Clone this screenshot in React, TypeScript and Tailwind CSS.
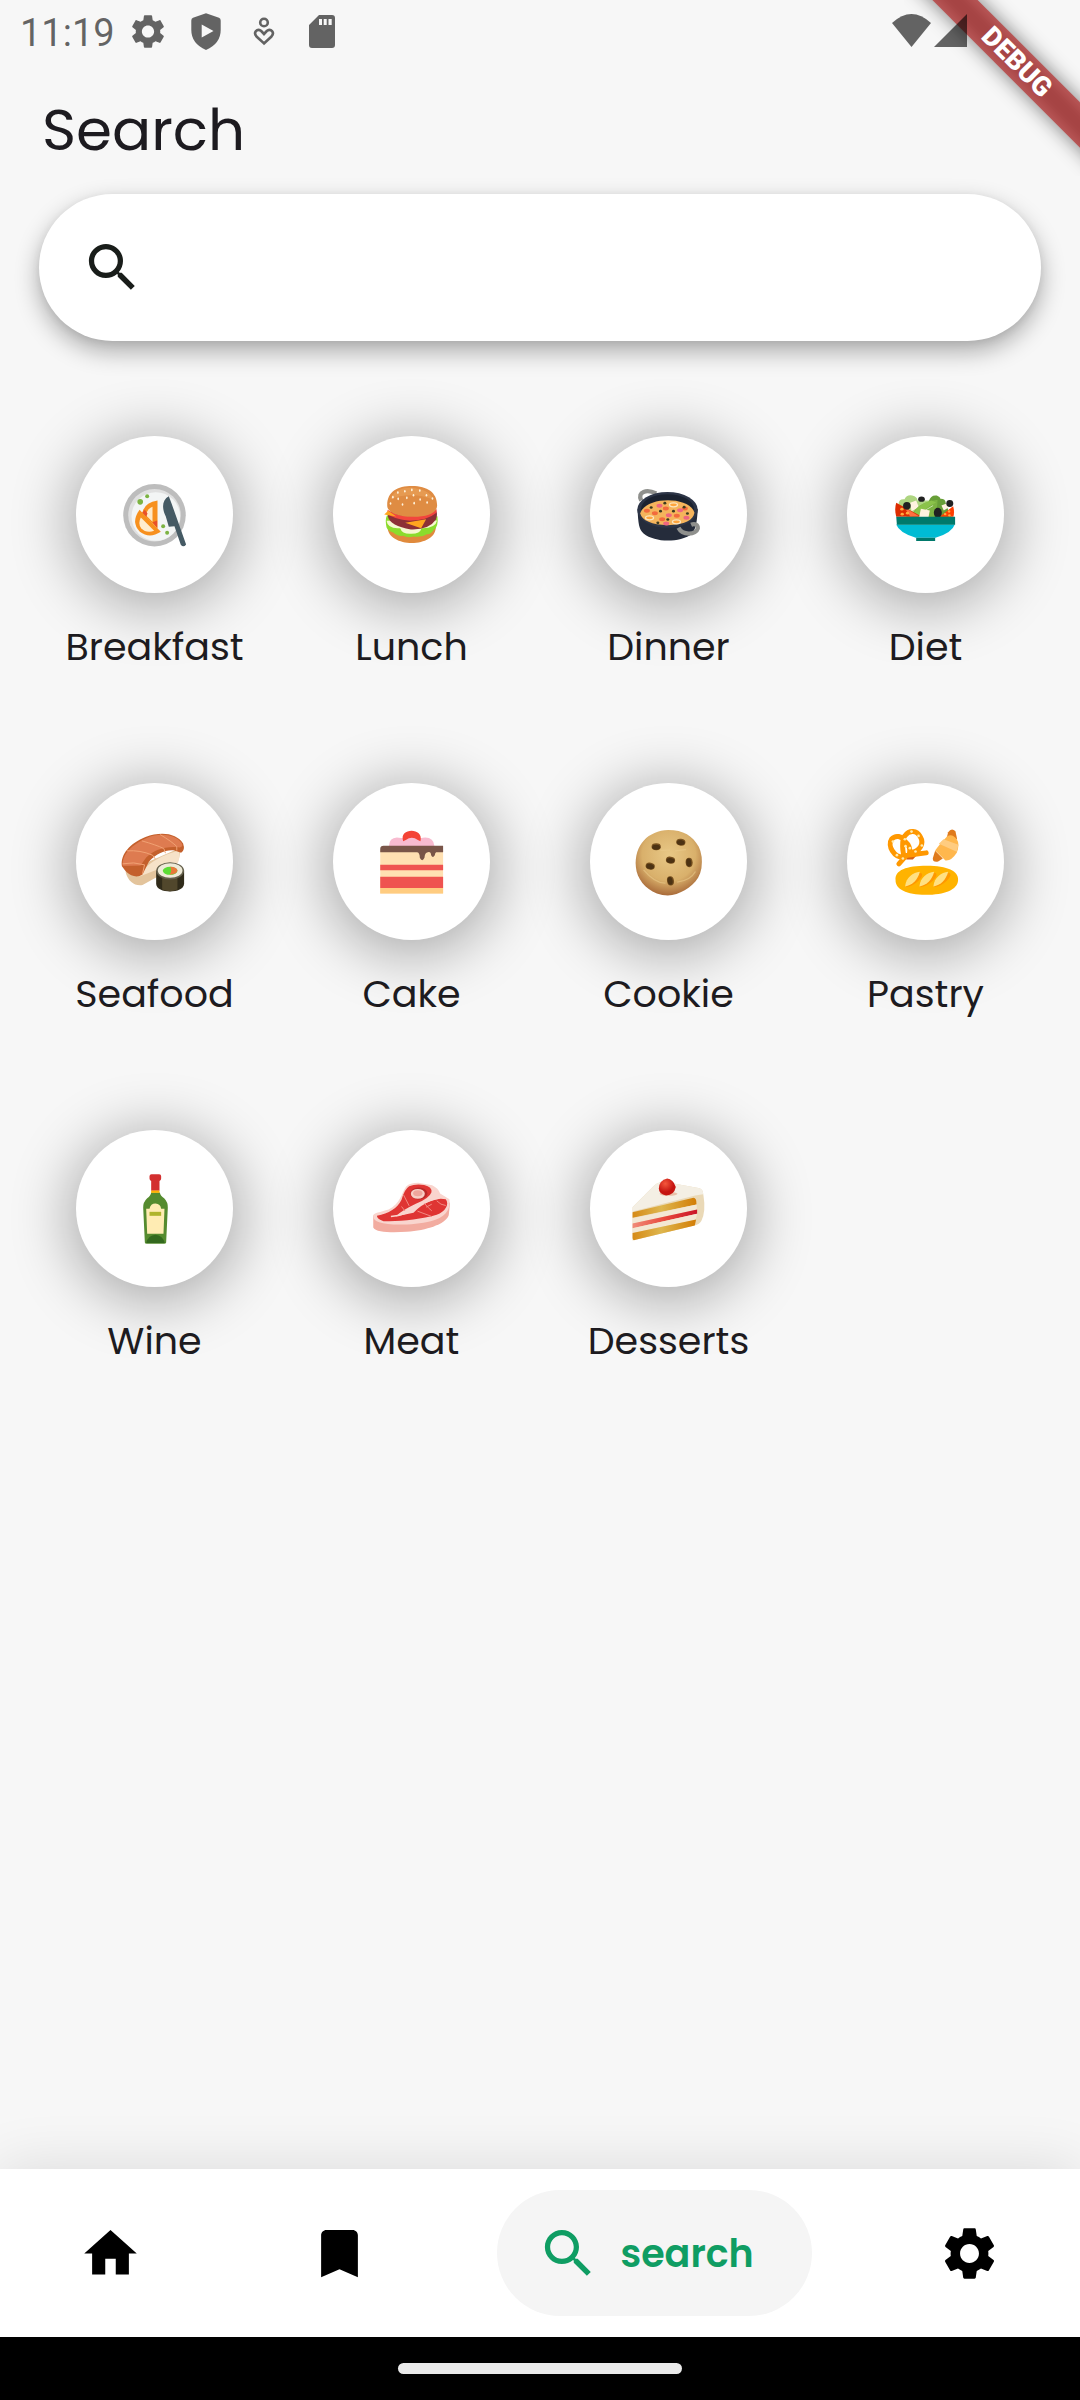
import type { ReactNode } from "react";

const GEAR =
  "M19.14 12.94c.04-.3.06-.61.06-.94 0-.32-.02-.64-.07-.94l2.03-1.58c.18-.14.23-.41.12-.61l-1.92-3.32c-.12-.22-.37-.29-.59-.22l-2.39.96c-.5-.38-1.03-.7-1.62-.94l-.36-2.54c-.04-.24-.24-.41-.48-.41h-3.84c-.24 0-.43.17-.47.41l-.36 2.54c-.59.24-1.13.57-1.62.94l-2.39-.96c-.22-.08-.47 0-.59.22L2.74 8.87c-.12.21-.08.47.12.61l2.03 1.58c-.05.3-.09.63-.09.94s.02.64.07.94l-2.03 1.58c-.18.14-.23.41-.12.61l1.92 3.32c.12.22.37.29.59.22l2.39-.96c.5.38 1.03.7 1.62.94l.36 2.54c.05.24.24.41.48.41h3.84c.24 0 .44-.17.47-.41l.36-2.54c.59-.24 1.13-.56 1.62-.94l2.39.96c.22.08.47 0 .59-.22l1.92-3.32c.12-.22.07-.47-.12-.61l-2.01-1.58zM12 15.6c-1.98 0-3.6-1.62-3.6-3.6s1.62-3.6 3.6-3.6 3.6 1.62 3.6 3.6-1.62 3.6-3.6 3.6z";
const SEARCH =
  "M15.5 14h-.79l-.28-.27C15.41 12.59 16 11.11 16 9.5 16 5.91 13.09 3 9.5 3S3 5.91 3 9.5 5.91 16 9.5 16c1.61 0 3.09-.59 4.23-1.57l.27.28v.79l5 4.99L20.49 19l-4.99-5zm-6 0C7.01 14 5 11.99 5 9.5S7.01 5 9.5 5 14 7.01 14 9.5 11.99 14 9.5 14z";
const HOME = "M10 20v-6h4v6h5v-8h3L12 3 2 12h3v8z";
const BOOKMARK = "M17 3H7c-1.1 0-2 .9-2 2v16l7-3 7 3V5c0-1.1-.9-2-2-2z";

function Glyph({ d }: { d: string }) {
  return (
    <svg viewBox="0 0 24 24" className="size-[63px] shrink-0" fill="currentColor" aria-hidden="true">
      <path d={d} />
    </svg>
  );
}

function StatusBar() {
  return (
    <div className="relative z-20 flex h-[63px] items-center text-black/60">
      <span className="ml-5 mt-0.5 w-[99px] font-[Roboto,sans-serif] text-[38px] leading-10">11:19</span>
      <svg viewBox="0 0 58 63" className="h-[63px] w-[58px]" fill="currentColor" aria-hidden="true">
        <g transform="translate(8.6 11.1) scale(1.7)">
          <path d={GEAR} />
        </g>
      </svg>
      <svg viewBox="0 0 58 63" className="h-[63px] w-[58px]" fill="currentColor" aria-hidden="true">
        <path
          fillRule="evenodd"
          d="M29 13.300L42 17.800Q43.700 18.500 43.700 20.500V30Q43.700 43.500 29 50Q14.300 43.500 14.300 30V20.500Q14.300 18.500 16 17.800ZM24.700 24.500V37.500L36.500 31Z"
        />
      </svg>
      <svg viewBox="0 0 58 63" className="h-[63px] w-[58px]" fill="none" stroke="currentColor" strokeWidth="2.600" aria-hidden="true">
        <circle cx="29" cy="22.500" r="3.800" />
        <path d="M29 43.400L21.500 36.500C18 32.500 22 28 26 30.800L29 34L32 30.800C36 28 40 32.500 36.500 36.500Z" />
      </svg>
      <svg viewBox="0 0 58 63" className="h-[63px] w-[58px]" fill="currentColor" aria-hidden="true">
        <path
          fillRule="evenodd"
          d="M26 15H39Q42 15 42 18V45Q42 48 39 48H19Q16 48 16 45V25ZM26 19V25H29V19ZM30.700 19V25H33.700V19ZM35.500 19V25H38.700V19Z"
        />
      </svg>
      <svg viewBox="0 0 39 63" className="ml-auto h-[63px] w-[39px]" fill="currentColor" aria-hidden="true">
        <path d="M0 23Q19.500 5 39 23L19.500 47Z" />
      </svg>
      <svg viewBox="0 0 33 63" className="ml-[3px] mr-[113px] h-[63px] w-[33px]" fill="currentColor" aria-hidden="true">
        <path d="M0 47L33 14V47Z" />
      </svg>
    </div>
  );
}

function DebugRibbon() {
  return (
    <div className="absolute right-0 top-0 z-10 size-44 overflow-hidden">
      <div className="absolute -left-[47px] top-[46px] h-8 w-80 rotate-45 bg-black/50 blur-[10px]" />
      <div className="absolute -left-[47px] top-[46px] flex h-8 w-80 rotate-45 items-center justify-center bg-[#b71c1c]/63 font-[Roboto,sans-serif] text-[27px] font-black text-white">
        DEBUG
      </div>
    </div>
  );
}

const ellipses = (pts: number[][], rx: number, ry: number, fill: string) =>
  pts.map(([x, y]) => <ellipse key={`${x}-${y}`} cx={x} cy={y} rx={rx} ry={ry} fill={fill} />);

const breakfast = (
  <>
    <circle cx="283" cy="286" r="94" fill="#bdbdbd" />
    <circle cx="283" cy="286" r="79" fill="#e0e0e0" />
    <circle cx="287" cy="290" r="73" fill="#f3f5f5" />
    <path d="M292 242V325L246 280Q252 248 292 242Z" fill="#f7901e" />
    <path d="M277 261V306L257 286Q261 267 277 261Z" fill="#ffe9c7" />
    <path d="M246 279L254 270L262 281L258 292ZM277 307L291 302V325Z" fill="#e8502a" />
    <path d="M238 270L302 336Q268 358 239 336Q211 308 238 270Z" fill="#f7901e" />
    <path d="M242 293L282 333Q258 341 243 325Q232 311 242 293Z" fill="#ffedd0" />
    <circle cx="240" cy="246" r="8.500" fill="#7cb342" />
    {ellipses([[261, 229], [309, 319], [321, 339]], 6, 6, "#7cb342")}
    <path d="M326 229C306 240 304 264 317 290L326 321L343 319L362 375Q370 385 378 374L334 250Z" fill="#455a64" />
  </>
);

const lunch = (
  <>
    <path d="M232 320H377C380 386 230 386 232 320Z" fill="#e08a3c" />
    <path d="M230 287Q224 300 229 323Q235 334 249 338Q262 350 279 348Q292 355 310 350Q334 354 350 343Q362 344 370 331Q386 322 382 289Z" fill="#8bdc2c" />
    <path d="M229 303Q232 328 270 325Q276 344 304 342Q330 342 334 325Q376 326 381 302Z" fill="#f6f8d0" />
    <path d="M233 290Q240 318 302 329Q356 331 377 300Q383 284 379 274L232 276Z" fill="#8c3036" />
    <path d="M232 270Q290 310 380 268L379 279Q352 302 300 303Q250 299 232 282Z" fill="#f2453d" />
    <path d="M222 284L234 273L258 290ZM285 309L348 298L333 325Z" fill="#ffa51f" />
    <path d="M231 258C230 216 260 198 306 198C352 198 382 218 381 258C380 282 345 292 306 291C267 291 232 280 231 258Z" fill="#df8c43" />
    <path d="M240 238C254 205 290 201 315 205C350 210 365 225 370 240C340 224 280 220 240 238Z" fill="#eba45c" opacity=".6" />
    {ellipses([[263, 218], [284, 214], [305, 210], [329, 212], [248, 232], [264, 237], [290, 234], [310, 226], [330, 239], [349, 226], [241, 251], [277, 254], [312, 250], [351, 248], [367, 236]], 2.5, 4, "#fff3dc")}
  </>
);

const dinner = (
  <>
    <path d="M993 242C980 215 1010 207 1038 221" fill="none" stroke="#8f908d" strokeWidth="13" />
    <path d="M982 270C984 310 986 330 1000 341C1036 370 1110 368 1144 343C1158 330 1161 300 1163 268Z" fill="#252c3b" />
    <ellipse cx="1072" cy="270" rx="91" ry="54" fill="#2d3547" />
    <ellipse cx="1072" cy="268" rx="80" ry="45" fill="#1b2230" />
    <path d="M990 281C1005 228 1140 228 1153 279C1150 300 1125 316 1072 316C1025 315 995 302 990 281Z" fill="#f5b45c" />
    {ellipses([[1010, 273], [1034, 280], [1067, 266], [1100, 288], [1056, 298], [1124, 266]], 9, 6, "#f26a3d")}
    {ellipses([[1048, 258], [1076, 286], [1129, 294], [1068, 311], [1110, 271]], 9, 6, "#ef6680")}
    {[[1018, 294], [1090, 255], [1099, 306]].map(([x, y]) => (
      <ellipse key={x} cx={x} cy={y} rx="12" ry="6" fill="#ffa43b" stroke="#fbe6c0" strokeWidth="4" />
    ))}
    {ellipses([[1023, 263], [1051, 274], [1064, 250], [1090, 274], [1122, 262], [1132, 281], [1073, 299], [1043, 309]], 4.5, 4, "#3c3a20")}
    <path d="M1105 324C1118 349 1158 345 1163 326C1164 315 1154 310 1143 315" fill="none" stroke="#8f908d" strokeWidth="13" />
  </>
);

const diet = (
  <>
    <path d="M205 254Q205 236 223 238Q229 224 246 227Q262 231 262 242L300 242L330 292H230Z" fill="#aed581" />
    <path d="M296 244Q302 224 320 227Q333 233 330 237Q346 236 347 250L362 292H310Z" fill="#689f38" />
    <ellipse cx="274" cy="238" rx="10" ry="8" fill="#212121" />
    <path d="M240 249L258 242L266 262L244 274Z" fill="#fff3e0" />
    <path d="M246 292Q250 250 322 240Q323 262 312 292Z" fill="#7cb342" />
    <path d="M247 289Q258 254 304 242L318 248Q284 262 268 292Z" fill="#8bc34a" />
    <path d="M266 291Q284 268 309 257" fill="none" stroke="#c5e1a5" strokeWidth="3" />
    <path d="M198 249L276 291H198Q192 268 198 249Z" fill="#dd2c00" />
    <path d="M222 262L268 290H240Z" fill="#ff6e40" />
    {ellipses([[215, 268], [216, 283], [232, 280]], 5, 4, "#ffab40")}
    <path d="M369 259Q374 275 370 291H329Z" fill="#ff3d00" />
    {ellipses([[345, 283], [357, 275], [358, 287]], 4, 3.5, "#ffab40")}
    <circle cx="230" cy="258" r="11.500" fill="#212121" />
    <path d="M334 257L351 250L355 263L341 272Z" fill="#fff3e0" />
    <circle cx="359" cy="251" r="10.500" fill="#212121" />
    <path d="M272 267L299 272L295 292H267Z" fill="#fff3e0" />
    <ellipse cx="323" cy="279" rx="12" ry="15" fill="#212121" />
    <path d="M198 314H374Q366 339 316 354H257Q207 339 198 314Z" fill="#00bcd4" />
    <path d="M198 291H375V315H200ZM258 354H315V364H258Z" fill="#00796b" />
  </>
);

const seafood = (
  <>
    <path d="M196 306C203 336 224 350 247 346L300 316C345 300 360 278 361 234Z" fill="#e3c49c" />
    <path d="M238 320C260 275 310 256 357 241Q361 262 353 280L290 300Z" fill="#f6e2c8" />
    <path d="M185 289C180 252 210 220 256 201C303 183 351 190 369 221Q376 241 363 249L343 242C315 239 290 251 266 276L247 314Q224 329 197 305Z" fill="#c4602c" />
    <path d="M188 288C184 254 215 224 258 205C300 187 345 194 364 219Q371 231 359 233C319 227 281 240 258 263L241 287Q214 288 188 288Z" fill="#de7b50" />
    <path d="M187 282Q220 275 253 285L247 312M200 243Q240 240 277 256L286 268M245 213Q288 225 311 236L316 250M300 194Q335 215 350 230V242" fill="none" stroke="#f0a273" strokeWidth="3" />
    <path d="M288 303V342C288 373 371 373 372 342V303Z" fill="#302b1a" />
    <path d="M306 322H352V359Q330 370 306 359Z" fill="#51472c" />
    <ellipse cx="330" cy="303" rx="42" ry="26" fill="#65604c" />
    <ellipse cx="330" cy="302" rx="37" ry="22" fill="#eeead8" />
    <ellipse cx="330" cy="303" rx="22" ry="12" fill="#5cdc36" />
    <path d="M330 291Q352 292 352 303Q350 314 328 315Q337 303 330 291Z" fill="#e8793a" />
  </>
);

const cake = (
  <>
    <path d="M986 229Q987 204 1010 203L1029 205Q1055 190 1080 205Q1120 196 1123 229Z" fill="#f8bbd0" />
    <path d="M1029 214C1015 173 1092 172 1081 214L1073 210Q1055 197 1037 210Z" fill="#f44336" />
    <path d="M960 241H1149V371H960Z" fill="#ffe0b2" />
    <path d="M960 247V237Q960 228 970 228H1149V247H1128Q1125 248 1124 256Q1118 267 1113 256Q1112 244 1103 247Q1094 248 1093 264Q1086 279 1079 264Q1079 247 1070 247Z" fill="#795548" />
    <path d="M960 285H1149V301H960ZM960 321H1149V355H960Z" fill="#ef5350" />
    <path d="M960 355H1149V371H960Z" fill="#ffcc80" />
  </>
);

const cookie = (
  <>
    <defs>
      <radialGradient id="cookie-dough" cx="50%" cy="38%" r="62%">
        <stop offset="0" stopColor="#e8c886" />
        <stop offset=".65" stopColor="#d9b06b" />
        <stop offset="1" stopColor="#a96b3a" />
      </radialGradient>
    </defs>
    <path d="M324 180C370 180 398 197 416 231Q429 258 424 295C417 338 382 359 349 373Q320 382 290 371C255 357 230 326 227 292C221 224 265 182 324 180Z" fill="url(#cookie-dough)" />
    <path d="M250 300Q285 341 316 340M351 337Q391 332 406 305M300 242L330 241M345 243L378 239" fill="none" stroke="#e9c98a" strokeWidth="4" opacity=".6" />
    {[[288, 231, 0], [362, 217, 8], [331, 271, 8], [270, 289, 12], [387, 278, 85], [331, 333, 80]].map(([x, y, r]) => (
      <g key={`${x}-${y}`} transform={`translate(${x} ${y}) rotate(${r})`}>
        <ellipse rx="14" ry="10.500" fill="#76501f" />
        <ellipse cy="1" rx="12" ry="7.500" fill="#4c3213" />
      </g>
    ))}
  </>
);

const pastry = (
  <>
    <path d="M1043 257L1070 256L1058 269H1038Z" fill="#d65f12" />
    <path d="M1016 282L1034 262C1000 266 981 226 994 208C1007 193 1025 200 1033 213C1048 226 1051 240 1048 252M1034 262C1026 250 1024 208 1034 198C1048 179 1070 182 1080 200C1092 220 1082 246 1048 249M1042 256L1098 249" fill="none" stroke="#ff9800" strokeWidth="15" strokeLinecap="round" strokeLinejoin="round" />
    {ellipses([[998, 215], [1010, 256], [1028, 266], [1054, 185], [1075, 198], [1085, 227], [1034, 208], [1036, 229], [1049, 235], [1066, 245]], 4, 4, "#ffecb3")}
    <path d="M1164 187Q1174 173 1186 184L1191 207H1159Z" fill="#df7a1c" />
    <path d="M1118 265L1125 243L1148 266L1134 275Q1117 278 1118 265Z" fill="#df7a1c" />
    <path d="M1161 200Q1175 190 1190 208Q1200 222 1190 249Q1174 274 1156 272L1125 242Q1143 216 1161 200Z" fill="#ffb74d" />
    <path d="M1150 208L1195 225L1190 246L1136 222Z" fill="#ffcc80" />
    <path d="M1006 331C1004 301 1038 288 1100 288C1162 288 1196 304 1194 331C1192 360 1154 375 1096 375C1039 375 1005 357 1006 331Z" fill="#ffb300" />
    {[0, 43, 85].map((x) => (
      <g key={x} transform={`translate(${x} 0)`}>
        <path d="M1037 348C1045 326 1065 308 1084 310Q1091 316 1075 333Q1056 351 1037 352Z" fill="#ff9800" />
        <path d="M1035 348C1037 325 1059 307 1079 306C1073 330 1056 347 1035 350Z" fill="#ffe082" />
      </g>
    ))}
  </>
);

const wine = (
  <>
    <path d="M273 248H299Q301 259 312 265Q324 277 323 294L318 398Q317 402 312 402H260Q254 402 254 398L249 294Q248 277 261 265Q272 258 273 248Z" fill="#558b2f" />
    <path d="M258 400Q264 376 286 375Q307 376 314 400Z" fill="#33691e" />
    <path d="M273 243V213Q268 211 268 206V199Q268 193 274 193H297Q303 193 303 199V206Q303 211 298 213V243Z" fill="#d32f2f" />
    <path d="M273 242H298V249H273Z" fill="#ffb300" />
    <path d="M258 297H268Q271 281 286 281Q301 282 303 297H313L310 372H261Z" fill="#ffecb3" />
    <path d="M268 306H303V318H268Z" fill="#afb42b" />
  </>
);

const meat = (
  <>
    <path d="M939 317V353C946 369 1000 369 1040 366C1098 361 1156 344 1166 316L1170 278Z" fill="#f2aca0" />
    <path d="M939 320C937 309 955 309 985 299C1020 284 1025 247 1038 230Q1050 218 1079 219L1116 226Q1135 235 1140 251L1168 268C1173 302 1152 324 1112 334C1065 345 990 349 957 337Q940 333 939 320Z" fill="#f9d5ce" />
    <path d="M950 318C986 311 1012 296 1024 270Q1032 239 1047 229Q1065 221 1092 225Q1117 231 1114 247Q1109 264 1067 282Q1025 302 1006 320L1060 309Q1080 286 1110 274Q1133 263 1157 268C1169 284 1155 305 1130 315C1082 329 1018 336 970 334Q950 328 950 318Z" fill="#df3533" />
    <path d="M992 320Q1038 317 1065 293Q1100 271 1137 264" fill="none" stroke="#f9d5ce" strokeWidth="5" />
    <ellipse cx="1076" cy="251" rx="26" ry="18" fill="#ba2929" />
    <ellipse cx="1073" cy="252" rx="21" ry="15" fill="#f8cec5" />
    <ellipse cx="1073" cy="250" rx="14" ry="9" fill="#efa69c" />
    <path d="M1030 255L1047 288M1024 290L1034 303M1093 281L1105 294L1115 303M1098 292L1115 283M1072 304L1115 320M1130 273Q1142 286 1157 287" fill="none" stroke="#f18a82" strokeWidth="3" />
  </>
);

const desserts = (
  <>
    <defs>
      <linearGradient id="sponge">
        <stop offset="0" stopColor="#d68a16" />
        <stop offset=".45" stopColor="#deb64e" />
        <stop offset="1" stopColor="#d37d05" />
      </linearGradient>
      <linearGradient id="jam">
        <stop offset="0" stopColor="#f08b78" />
        <stop offset=".5" stopColor="#e8473b" />
        <stop offset="1" stopColor="#ca1628" />
      </linearGradient>
      <radialGradient id="cherry" cx="38%" cy="30%">
        <stop offset="0" stopColor="#f4583c" />
        <stop offset="1" stopColor="#c51410" />
      </radialGradient>
    </defs>
    <path d="M217 292L282 227Q296 215 316 216L415 234Q430 237 430 256Q438 304 424 333Q418 345 400 348L217 392Z" fill="#ead9b7" />
    <path d="M217 292L282 227Q296 215 316 216L415 234Q430 237 429 253L405 257L217 305Z" fill="#f4efe4" />
    <path d="M217 307L400 264Q410 264 409 284L217 324Z" fill="url(#sponge)" />
    <path d="M217 325L410 284V300L217 341Z" fill="#f3e7d3" />
    <path d="M217 341L411 299V312L217 355Z" fill="url(#jam)" />
    <path d="M217 355L411 312L407 330L217 370Z" fill="#f3e7d3" />
    <path d="M217 370L408 329L404 347L223 391Q217 392 217 385Z" fill="url(#sponge)" />
    <ellipse cx="325" cy="252" rx="27" ry="6" fill="#e0a080" opacity=".6" />
    <path d="M321 206Q339 208 347 231Q342 255 318 257Q296 253 296 236Q297 211 321 206Z" fill="url(#cherry)" />
  </>
);

const categories: { name: string; viewBox: string; art: ReactNode }[] = [
  { name: "Breakfast", viewBox: "47 48 472 472", art: breakfast },
  { name: "Lunch", viewBox: "68 48 472 472", art: lunch },
  { name: "Dinner", viewBox: "839 48 472 472", art: dinner },
  { name: "Diet", viewBox: "50 48 472 472", art: diet },
  { name: "Seafood", viewBox: "47 39 472 472", art: seafood },
  { name: "Cake", viewBox: "818 39 472 472", art: cake },
  { name: "Cookie", viewBox: "89 39 472 472", art: cookie },
  { name: "Pastry", viewBox: "860 39 472 472", art: pastry },
  { name: "Wine", viewBox: "47 60 472 472", art: wine },
  { name: "Meat", viewBox: "818 60 472 472", art: meat },
  { name: "Desserts", viewBox: "89 60 472 472", art: desserts },
];

export default function App() {
  return (
    <div className="relative flex min-h-screen flex-col bg-[#f7f7f7] font-[Poppins,Inter,sans-serif] text-[#1d1b20]">
      <StatusBar />
      <DebugRibbon />
      <main className="flex-1">
        <h1 className="ml-[42px] mt-[35px] text-[58px] leading-16">Search</h1>
        <label className="mx-[39px] mt-8 flex h-[147px] items-center gap-6 rounded-full bg-white px-[42px] text-[#191d1a] shadow-[0_10px_24px_rgba(0,0,0,0.32),0_2px_8px_rgba(0,0,0,0.06)]">
          <Glyph d={SEARCH} />
          <input type="search" aria-label="Search recipes" className="min-w-0 flex-1 bg-transparent text-[42px] outline-none" />
        </label>
        <div className="mt-[95px] grid grid-cols-4 gap-y-[108px] px-[26px]">
          {categories.map((c) => (
            <button key={c.name} type="button" className="flex flex-col items-center gap-[26px]">
              <span className="size-[157px] rounded-full bg-white shadow-[0_8px_60px_6px_rgba(0,0,0,0.33)]">
                <svg viewBox={c.viewBox} className="size-full" aria-hidden="true">
                  {c.art}
                </svg>
              </span>
              <span className="relative text-[38px] leading-14">{c.name}</span>
            </button>
          ))}
        </div>
      </main>
      <nav className="flex h-[168px] items-center justify-between bg-white px-[39px] text-black shadow-[0_0_60px_rgba(0,0,0,0.12)]">
        <button type="button" aria-label="Home" className="px-10">
          <Glyph d={HOME} />
        </button>
        <button type="button" aria-label="Bookmarks" className="px-10">
          <Glyph d={BOOKMARK} />
        </button>
        <button type="button" aria-current="page" className="flex h-[126px] items-center gap-5 rounded-full bg-[#f5f5f5] pl-10 pr-[58px] text-[#0f9d63]">
          <Glyph d={SEARCH} />
          <span className="text-[38px] font-semibold">search</span>
        </button>
        <button type="button" aria-label="Settings" className="px-10">
          <Glyph d={GEAR} />
        </button>
      </nav>
      <div className="relative flex h-[63px] items-center justify-center bg-black">
        <div className="h-[11px] w-[284px] rounded-full bg-[#eaeaea]" />
      </div>
    </div>
  );
}
